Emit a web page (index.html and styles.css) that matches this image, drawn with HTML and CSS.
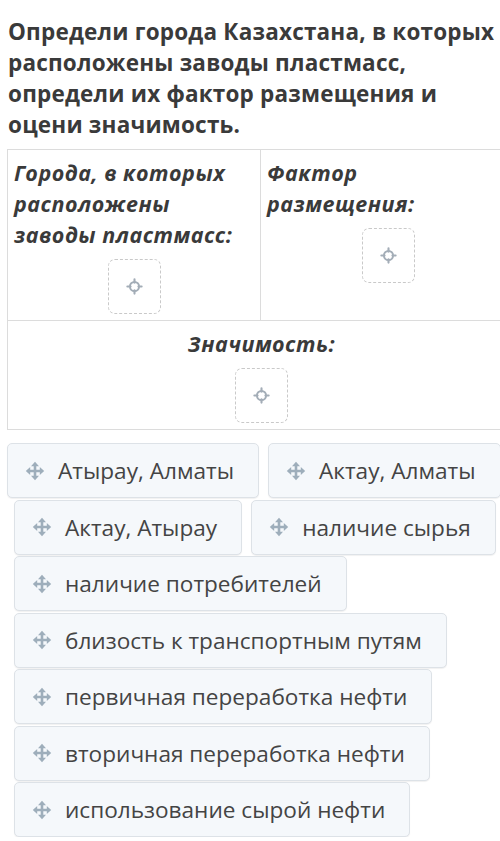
FILE: index.html
```html
<!DOCTYPE html>
<html lang="ru">
<head>
<meta charset="utf-8">
<link rel="stylesheet" href="styles.css">
</head>
<body>
<div class="page">
  <h1 class="title">Определи города Казахстана, в которых расположены заводы пластмасс, определи их фактор размещения и оцени значимость.</h1>
  <div class="table">
    <div class="cell">
      <div class="head">Города, в которых расположены заводы пластмасс:</div>
      <div class="target"><svg viewBox="0 0 16 16" width="17" height="17"><circle cx="8" cy="8" r="4.3" fill="none" stroke="#a3adb7" stroke-width="1.8"/><path d="M8 1.3v3M8 11.7v3M1.3 8h3M11.7 8h3" stroke="#a3adb7" stroke-width="2" stroke-linecap="round"/></svg></div>
    </div>
    <div class="cell">
      <div class="head">Фактор размещения:</div>
      <div class="target"><svg viewBox="0 0 16 16" width="17" height="17"><circle cx="8" cy="8" r="4.3" fill="none" stroke="#a3adb7" stroke-width="1.8"/><path d="M8 1.3v3M8 11.7v3M1.3 8h3M11.7 8h3" stroke="#a3adb7" stroke-width="2" stroke-linecap="round"/></svg></div>
    </div>
    <div class="cell wide">
      <div class="head center">Значимость:</div>
      <div class="target"><svg viewBox="0 0 16 16" width="17" height="17"><circle cx="8" cy="8" r="4.3" fill="none" stroke="#a3adb7" stroke-width="1.8"/><path d="M8 1.3v3M8 11.7v3M1.3 8h3M11.7 8h3" stroke="#a3adb7" stroke-width="2" stroke-linecap="round"/></svg></div>
    </div>
  </div>
  <div class="chips">
    <div class="chip first"><svg class="mv" viewBox="0 0 20 20"><path d="M10 4v12M4 10h12" stroke="#9eaebb" stroke-width="2.6"/><path d="M10 0.8L6 5.2h8zM10 19.2L6 14.8h8zM0.8 10L5.2 6v8zM19.2 10L14.8 6v8z" fill="#9eaebb"/></svg><span>Атырау, Алматы</span></div>
    <div class="chip"><svg class="mv" viewBox="0 0 20 20"><path d="M10 4v12M4 10h12" stroke="#9eaebb" stroke-width="2.6"/><path d="M10 0.8L6 5.2h8zM10 19.2L6 14.8h8zM0.8 10L5.2 6v8zM19.2 10L14.8 6v8z" fill="#9eaebb"/></svg><span>Актау, Алматы</span></div>
    <div class="chip"><svg class="mv" viewBox="0 0 20 20"><path d="M10 4v12M4 10h12" stroke="#9eaebb" stroke-width="2.6"/><path d="M10 0.8L6 5.2h8zM10 19.2L6 14.8h8zM0.8 10L5.2 6v8zM19.2 10L14.8 6v8z" fill="#9eaebb"/></svg><span>Актау, Атырау</span></div>
    <div class="chip"><svg class="mv" viewBox="0 0 20 20"><path d="M10 4v12M4 10h12" stroke="#9eaebb" stroke-width="2.6"/><path d="M10 0.8L6 5.2h8zM10 19.2L6 14.8h8zM0.8 10L5.2 6v8zM19.2 10L14.8 6v8z" fill="#9eaebb"/></svg><span>наличие сырья</span></div>
    <div class="chip"><svg class="mv" viewBox="0 0 20 20"><path d="M10 4v12M4 10h12" stroke="#9eaebb" stroke-width="2.6"/><path d="M10 0.8L6 5.2h8zM10 19.2L6 14.8h8zM0.8 10L5.2 6v8zM19.2 10L14.8 6v8z" fill="#9eaebb"/></svg><span>наличие потребителей</span></div>
    <div class="chip"><svg class="mv" viewBox="0 0 20 20"><path d="M10 4v12M4 10h12" stroke="#9eaebb" stroke-width="2.6"/><path d="M10 0.8L6 5.2h8zM10 19.2L6 14.8h8zM0.8 10L5.2 6v8zM19.2 10L14.8 6v8z" fill="#9eaebb"/></svg><span>близость к транспортным путям</span></div>
    <div class="chip"><svg class="mv" viewBox="0 0 20 20"><path d="M10 4v12M4 10h12" stroke="#9eaebb" stroke-width="2.6"/><path d="M10 0.8L6 5.2h8zM10 19.2L6 14.8h8zM0.8 10L5.2 6v8zM19.2 10L14.8 6v8z" fill="#9eaebb"/></svg><span>первичная переработка нефти</span></div>
    <div class="chip"><svg class="mv" viewBox="0 0 20 20"><path d="M10 4v12M4 10h12" stroke="#9eaebb" stroke-width="2.6"/><path d="M10 0.8L6 5.2h8zM10 19.2L6 14.8h8zM0.8 10L5.2 6v8zM19.2 10L14.8 6v8z" fill="#9eaebb"/></svg><span>вторичная переработка нефти</span></div>
    <div class="chip"><svg class="mv" viewBox="0 0 20 20"><path d="M10 4v12M4 10h12" stroke="#9eaebb" stroke-width="2.6"/><path d="M10 0.8L6 5.2h8zM10 19.2L6 14.8h8zM0.8 10L5.2 6v8zM19.2 10L14.8 6v8z" fill="#9eaebb"/></svg><span>использование сырой нефти</span></div>
  </div>
</div>
</body>
</html>
```

FILE: styles.css
```css
html, body {
  margin: 0;
  padding: 0;
  background: #ffffff;
  overflow: hidden;
}
body {
  font-family: "Open Sans", "Noto Sans", sans-serif;
  color: #3b3b3b;
  width: 500px;
}
.page {
  padding-top: 16px;
}
.title {
  margin: 0 0 0 8px;
  font-size: 22.5px;
  letter-spacing: 0.2px;
  line-height: 31px;
  font-weight: 700;
  color: #3a3a3a;
}
.table {
  margin: 9px 0 0 7px;
  width: 508px;
  display: grid;
  grid-template-columns: 253px 255px;
  border-top: 1px solid #dcdcdc;
  border-left: 1px solid #dcdcdc;
}
.cell {
  border-right: 1px solid #dcdcdc;
  border-bottom: 1px solid #dcdcdc;
  padding: 7px 6px 6px 6px;
  display: flex;
  flex-direction: column;
  align-items: center;
}
.cell.wide {
  grid-column: 1 / 3;
}
.head {
  align-self: stretch;
  font-size: 21.5px;
  letter-spacing: 0.5px;
  line-height: 31px;
  font-weight: 700;
  font-style: italic;
  color: #3a3a3a;
}
.head.center {
  text-align: center;
}
.target {
  margin-top: 9px;
  width: 51px;
  height: 53px;
  border: 1px dashed #c9c9c9;
  border-radius: 7px;
  display: flex;
  align-items: center;
  justify-content: center;
}
.chips {
  margin-top: 13px;
  margin-right: -12px;
  padding-left: 14px;
  display: flex;
  flex-wrap: wrap;
  column-gap: 9px;
  row-gap: 1.5px;
}
.chip {
  box-sizing: border-box;
  height: 55px;
  display: flex;
  align-items: center;
  padding: 0 24px 0 17px;
  background: #f5f8fb;
  border: 1px solid #dde2e7;
  border-radius: 5px;
  box-shadow: 0 1px 1px rgba(0,0,0,0.06);
  font-size: 22.6px;
  color: #444444;
  white-space: nowrap;
}
.chip.first {
  margin-left: -7px;
}
.mv {
  width: 20px;
  height: 20px;
  margin-right: 13px;
  flex: none;
}
```
